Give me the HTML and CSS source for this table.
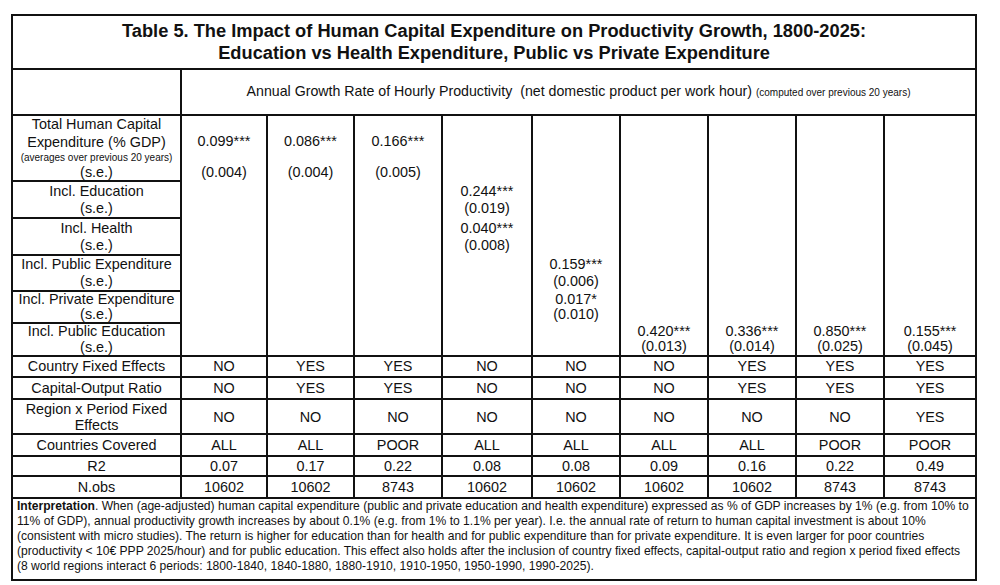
FILE: index.html
```html
<!DOCTYPE html>
<html>
<head>
<meta charset="utf-8">
<link rel="stylesheet" href="styles.css">
</head>
<body>
<table class="tbl">
  <colgroup>
    <col class="c-label">
    <col class="c86"><col class="c87"><col class="c88"><col class="c90">
    <col class="c88"><col class="c88"><col class="c88"><col class="c88"><col class="c92">
  </colgroup>
  <tr class="r-title">
    <td colspan="10" class="title">Table 5. The Impact of Human Capital Expenditure on Productivity Growth, 1800-2025:<br>Education vs Health Expenditure, Public vs Private Expenditure</td>
  </tr>
  <tr class="r-head">
    <td></td>
    <td colspan="9" class="head">Annual Growth Rate of Hourly Productivity&nbsp; (net domestic product per work hour) <span class="small">(computed over previous 20 years)</span></td>
  </tr>
  <tr class="r1">
    <td class="lab">
      <div class="l1">Total Human Capital</div>
      <div class="l2">Expenditure (% GDP)</div>
      <div class="small l3">(averages over previous 20 years)</div>
      <div class="l4">(s.e.)</div>
    </td>
    <td class="d top"><div class="v">0.099***</div><div class="se">(0.004)</div></td>
    <td class="d top"><div class="v">0.086***</div><div class="se">(0.004)</div></td>
    <td class="d top"><div class="v">0.166***</div><div class="se">(0.005)</div></td>
    <td class="d"></td><td class="d"></td><td class="d"></td><td class="d"></td><td class="d"></td><td class="d"></td>
  </tr>
  <tr class="r2">
    <td class="lab">Incl. Education<br>(s.e.)</td>
    <td class="d"></td><td class="d"></td><td class="d"></td>
    <td class="d">0.244***<br>(0.019)</td>
    <td class="d"></td><td class="d"></td><td class="d"></td><td class="d"></td><td class="d"></td>
  </tr>
  <tr class="r3">
    <td class="lab">Incl. Health<br>(s.e.)</td>
    <td class="d"></td><td class="d"></td><td class="d"></td>
    <td class="d">0.040***<br>(0.008)</td>
    <td class="d"></td><td class="d"></td><td class="d"></td><td class="d"></td><td class="d"></td>
  </tr>
  <tr class="r4">
    <td class="lab">Incl. Public Expenditure<br>(s.e.)</td>
    <td class="d"></td><td class="d"></td><td class="d"></td><td class="d"></td>
    <td class="d">0.159***<br>(0.006)</td>
    <td class="d"></td><td class="d"></td><td class="d"></td><td class="d"></td>
  </tr>
  <tr class="r5">
    <td class="lab">Incl. Private Expenditure<br>(s.e.)</td>
    <td class="d"></td><td class="d"></td><td class="d"></td><td class="d"></td>
    <td class="d">0.017*<br>(0.010)</td>
    <td class="d"></td><td class="d"></td><td class="d"></td><td class="d"></td>
  </tr>
  <tr class="r6">
    <td class="lab">Incl. Public Education<br>(s.e.)</td>
    <td class="d"></td><td class="d"></td><td class="d"></td><td class="d"></td><td class="d"></td>
    <td class="d">0.420***<br>(0.013)</td>
    <td class="d">0.336***<br>(0.014)</td>
    <td class="d">0.850***<br>(0.025)</td>
    <td class="d">0.155***<br>(0.045)</td>
  </tr>
  <tr class="r-cfe">
    <td>Country Fixed Effects</td>
    <td>NO</td><td>YES</td><td>YES</td><td>NO</td><td>NO</td><td>NO</td><td>YES</td><td>YES</td><td>YES</td>
  </tr>
  <tr class="r-cor">
    <td>Capital-Output Ratio</td>
    <td>NO</td><td>YES</td><td>YES</td><td>NO</td><td>NO</td><td>NO</td><td>YES</td><td>YES</td><td>YES</td>
  </tr>
  <tr class="r-rpf">
    <td>Region x Period Fixed<br>Effects</td>
    <td>NO</td><td>NO</td><td>NO</td><td>NO</td><td>NO</td><td>NO</td><td>NO</td><td>NO</td><td>YES</td>
  </tr>
  <tr class="r-cc">
    <td>Countries Covered</td>
    <td>ALL</td><td>ALL</td><td>POOR</td><td>ALL</td><td>ALL</td><td>ALL</td><td>ALL</td><td>POOR</td><td>POOR</td>
  </tr>
  <tr class="r-r2">
    <td>R2</td>
    <td>0.07</td><td>0.17</td><td>0.22</td><td>0.08</td><td>0.08</td><td>0.09</td><td>0.16</td><td>0.22</td><td>0.49</td>
  </tr>
  <tr class="r-nobs">
    <td>N.obs</td>
    <td>10602</td><td>10602</td><td>8743</td><td>10602</td><td>10602</td><td>10602</td><td>10602</td><td>8743</td><td>8743</td>
  </tr>
  <tr class="r-interp">
    <td colspan="10" class="interp"><b>Interpretation</b>. When (age-adjusted) human capital expenditure (public and private education and health expenditure) expressed as % of GDP increases by 1% (e.g. from 10% to<br>11% of GDP), annual productivity growth increases by about 0.1% (e.g. from 1% to 1.1% per year). I.e. the annual rate of return to human capital investment is about 10%<br>(consistent with micro studies). The return is higher for education than for health and for public expenditure than for private expenditure. It is even larger for poor countries<br>(productivity &lt; 10€ PPP 2025/hour) and for public education. This effect also holds after the inclusion of country fixed effects, capital-output ratio and region x period fixed effects<br>(8 world regions interact 6 periods: 1800-1840, 1840-1880, 1880-1910, 1910-1950, 1950-1990, 1990-2025).</td>
  </tr>
</table>
</body>
</html>
```

FILE: styles.css
```css
html, body {
  margin: 0;
  padding: 0;
  background: #ffffff;
}

.tbl {
  border-collapse: collapse;
  table-layout: fixed;
  width: 966px;
  margin: 14px 0 0 11px;
  font-family: "Liberation Sans", Arial, sans-serif;
  color: #111;
}

.c-label { width: 169px; }
.c86 { width: 86px; }
.c87 { width: 87px; }
.c88 { width: 88px; }
.c90 { width: 90px; }
.c92 { width: 92px; }

.tbl td {
  border: 2px solid #111;
  text-align: center;
  vertical-align: middle;
  padding: 0;
  font-size: 14.4px;
  line-height: 17px;
  white-space: nowrap;
}

.tbl td.title {
  font-size: 18.25px;
  font-weight: bold;
  line-height: 22px;
  height: 52px;
}

.tbl td.head {
  height: 44px;
  font-size: 14.2px;
}

.small {
  font-size: 10px;
}

.lab .l1 { line-height: 17px; }
.lab .l2 { line-height: 18px; }
.lab .l3 { line-height: 14px; }
.lab .l4 { line-height: 15px; }

.tbl td.d {
  border-top: none;
  border-bottom: none;
}

.tbl td.top {
  vertical-align: top;
}

.top .v {
  padding-top: 17px;
}

.top .se {
  margin-top: 14px;
}

.r1 td { height: 64px; }
.r2 td { height: 35px; }
.r3 td { height: 35px; }
.r4 td { height: 33px; }
.r5 td { height: 30px; line-height: 15px; }
.r6 td { height: 31px; line-height: 15.5px; }

.r-cfe td { height: 19px; }
.r-cor td { height: 20px; }
.r-rpf td { height: 33px; line-height: 16px; }
.r-cc td { height: 20px; }
.r-r2 td { height: 18px; }
.r-nobs td { height: 20px; }

.tbl td.interp {
  text-align: left;
  font-size: 12.1px;
  line-height: 15px;
  padding: 0 3px 5px 4px;
}
```
